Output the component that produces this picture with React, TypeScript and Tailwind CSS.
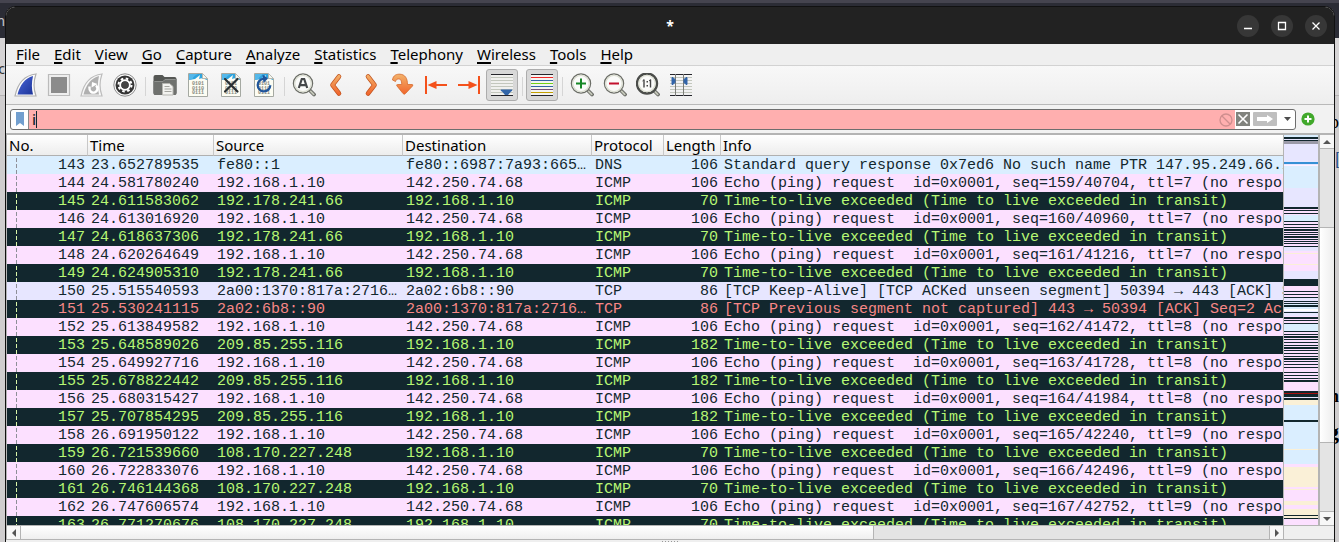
import React from 'react';

type Kind = 'dns' | 'icmp' | 'ttl' | 'tcp' | 'bad';

const tones: Record<Kind, string> = {
  dns: 'bg-[#daeeff] text-[#12272e]',
  icmp: 'bg-[#fce0ff] text-[#12272e]',
  ttl: 'bg-[#12272e] text-[#b7f774]',
  tcp: 'bg-[#e7e6ff] text-[#12272e]',
  bad: 'bg-[#12272e] text-[#f78787]',
};

const LOCAL = '192.168.1.10';
const TARGET = '142.250.74.68';
const TTL = 'Time-to-live exceeded (Time to live exceeded in transit)';

type Packet = [number, string, string, string, string, number, string, Kind];

const ping = (no: number, time: string, seq: string, ttl: number): Packet => [
  no, time, LOCAL, TARGET, 'ICMP', 106,
  `Echo (ping) request  id=0x0001, seq=${seq}, ttl=${ttl} (no response found!)`, 'icmp',
];
const exceeded = (no: number, time: string, from: string, len: number): Packet => [
  no, time, from, LOCAL, 'ICMP', len, TTL, 'ttl',
];

const packets: Packet[] = [
  [143, '23.652789535', 'fe80::1', 'fe80::6987:7a93:665…', 'DNS', 106, 'Standard query response 0x7ed6 No such name PTR 147.95.249.66.in-addr.arpa', 'dns'],
  ping(144, '24.581780240', '159/40704', 7),
  exceeded(145, '24.611583062', '192.178.241.66', 70),
  ping(146, '24.613016920', '160/40960', 7),
  exceeded(147, '24.618637306', '192.178.241.66', 70),
  ping(148, '24.620264649', '161/41216', 7),
  exceeded(149, '24.624905310', '192.178.241.66', 70),
  [150, '25.515540593', '2a00:1370:817a:2716…', '2a02:6b8::90', 'TCP', 86, '[TCP Keep-Alive] [TCP ACKed unseen segment] 50394 → 443 [ACK] Seq=1', 'tcp'],
  [151, '25.530241115', '2a02:6b8::90', '2a00:1370:817a:2716…', 'TCP', 86, '[TCP Previous segment not captured] 443 → 50394 [ACK] Seq=2 Ack=2', 'bad'],
  ping(152, '25.613849582', '162/41472', 8),
  exceeded(153, '25.648589026', '209.85.255.116', 182),
  ping(154, '25.649927716', '163/41728', 8),
  exceeded(155, '25.678822442', '209.85.255.116', 182),
  ping(156, '25.680315427', '164/41984', 8),
  exceeded(157, '25.707854295', '209.85.255.116', 182),
  ping(158, '26.691950122', '165/42240', 9),
  exceeded(159, '26.721539660', '108.170.227.248', 70),
  ping(160, '26.722833076', '166/42496', 9),
  exceeded(161, '26.746144368', '108.170.227.248', 70),
  ping(162, '26.747606574', '167/42752', 9),
  exceeded(163, '26.771270676', '108.170.227.248', 70),
];

const columns: [string, string][] = [
  ['No.', 'w-[81px]'],
  ['Time', 'w-[126px]'],
  ['Source', 'w-[189px]'],
  ['Destination', 'w-[189px]'],
  ['Protocol', 'w-[72px]'],
  ['Length', 'w-[57px]'],
  ['Info', ''],
];

const menus = ['File', 'Edit', 'View', 'Go', 'Capture', 'Analyze', 'Statistics', 'Telephony', 'Wireless', 'Tools', 'Help'];

/* Overview strip: [start, height, colour] bands, then thin dark lines. */
const P = '#fce0ff', L = '#e7e6ff', B = '#daeeff', Y = '#faf0d7', D = '#12272e';
const bands: [number, number, string][] = [
  [0, 2, B], [2, 2, D], [4, 1, L], [5, 1, D], [6, 3, '#9b9aa8'], [9, 18, L], [27, 2, '#3590d5'], [29, 1, L], [30, 1, '#fff0ff'],
  [31, 22, B], [53, 19, L], [72, 8, P], [80, 6, B], [86, 25, P], [111, 5, L], [116, 20, P], [118, 1, Y], [129, 1, Y],
  [136, 8, L], [144, 7, D], [151, 12, P], [163, 5, L], [168, 6, B], [174, 2, '#ffffff'], [176, 5, L], [181, 8, P],
  [189, 7, B], [196, 60, P], [256, 3, D], [258, 1, '#a5100f'], [259, 1, D], [260, 5, L],
  [265, 5, Y], [270, 44, B], [285, 2, D], [314, 1, Y], [315, 14, B], [329, 3, P], [332, 20, Y], [352, 14, P], [354, 1, Y],
  [366, 4, Y], [370, 4, P], [374, 10, Y], [384, 5, P],
];
const lines: [number, number][] = [
  [72, 2], [75, 1], [78, 1], [86, 1], [89, 1], [92, 1], [94, 2], [97, 1], [99, 1], [101, 2], [104, 1], [106, 1], [108, 1], [111, 1],
  [156, 1], [159, 1], [162, 1], [166, 1], [168, 1], [170, 2], [177, 1], [182, 2], [185, 1], [188, 1],
  [196, 1], [199, 1], [201, 2], [204, 1], [207, 1], [210, 1], [212, 2], [215, 1], [218, 1], [221, 1], [223, 2], [226, 1], [229, 1],
  [232, 1], [237, 1], [240, 1], [243, 1], [245, 2], [260, 2], [263, 2], [380, 1], [383, 1],
];

function Overview() {
  return (
    <svg className="block h-full w-full" viewBox="0 0 34 390" preserveAspectRatio="none" shapeRendering="crispEdges" aria-hidden="true">
      <rect width="34" height="390" fill={P} />
      {bands.map(([y, h, c], i) => <rect key={i} y={y} width="34" height={h} fill={c} />)}
      {lines.map(([y, h], i) => <rect key={i} y={y} width="34" height={h} fill={D} />)}
    </svg>
  );
}

function Icon({ children }: { children: React.ReactNode }) {
  return <svg className="h-6 w-6" viewBox="0 0 24 24" fill="none" aria-hidden="true">{children}</svg>;
}

function ToolButton({ label, pressed, children }: { label: string; pressed?: boolean; children: React.ReactNode }) {
  return (
    <button
      type="button"
      aria-label={label}
      className={`flex h-8 w-8 items-center justify-center rounded-[3px] border ${pressed ? 'border-[#acacac] bg-[#d8d8d8]' : 'border-transparent'}`}
    >
      <Icon>{children}</Icon>
    </button>
  );
}

const Separator = () => <div className="mr-[2px] ml-[3px] h-[19px] w-px self-center bg-[#d5d5d5]" />;

function Sheet() {
  return (
    <g>
      <path d="M2.500 .5h14l5 5v18h-19z" fill="#fdfdf3" stroke="#a5a9a2" />
      <path d="M3 1h13v5h5v1l-5-2-3 1 1-4-5 4-6 1z" fill="#2fa4df" />
      <path d="M3 1h9C9 2 7 4 6.500 6L3 7z" fill="#55b8ea" />
      <path d="M16.500 .5v5h5z" fill="#f7f7ee" stroke="#b5b9b2" />
      <g fill="#85897f" fontFamily="Liberation Mono" fontSize="5" fontWeight="bold">
        <text x="6" y="12">0101</text>
        <text x="6" y="16.500">0110</text>
        <text x="6" y="21">0111</text>
      </g>
    </g>
  );
}

function Lens({ dark }: { dark?: boolean }) {
  const ring = dark ? '#4b4d4a' : '#6c6e67';
  return (
    <g>
      <path d="M17.500 17l4.500 4.500" stroke="#6a6c67" strokeWidth="3.800" strokeLinecap="round" />
      <path d="M18.500 18.200l3.200 3.200" stroke="#c5c8ba" strokeWidth="1.800" strokeLinecap="round" />
      <circle cx="11" cy="10.500" r={dark ? 10 : 9.6} fill="#fbfbfa" stroke={ring} strokeWidth={dark ? 2.4 : 1.3} />
      <circle cx="11" cy="10.500" r="8.200" stroke="#dcdfd2" strokeWidth="1.200" />
    </g>
  );
}

const FIN = 'M1 23C3.500 11 9 2.500 22 1c-2.500 7-2.500 15 0 22z';
const FIN_IN = 'M3.500 21.500C6 12 11 5 19 3c-1.500 7-1.500 12.500 0 18.500z';

function Toolbar() {
  return (
    <div role="toolbar" aria-label="Main toolbar" className="flex h-[39px] shrink-0 items-start gap-px border-b border-[#b9b9b9] bg-linear-to-b from-[#f8f8f8] to-[#eeeeee] pt-[3px] pl-1">
      <ToolButton label="Start capture">
        <path d={FIN} fill="#fbfbfb" stroke="#b0b0b0" strokeWidth="1.200" />
        <path d={FIN_IN} fill="url(#fin)" />
        <defs><linearGradient id="fin" x2="1" y2="1"><stop stopColor="#4a66d8" /><stop offset="1" stopColor="#1c3499" /></linearGradient></defs>
      </ToolButton>
      <ToolButton label="Stop capture">
        <path d="M1.500 1.500h21v21h-21z" fill="#eee" stroke="#bbb" strokeWidth="1.200" /><path d="M4 4h16v16H4z" fill="#8b8b8b" />
      </ToolButton>
      <ToolButton label="Restart capture">
        <path d={FIN} fill="#f7f7f7" stroke="#bdbdbd" strokeWidth="1.200" />
        <path d={FIN_IN} fill="#b0b0b0" />
        <path d="M9.500 13.500v1.500a4 4 0 1 0 6.500-2.500" stroke="#fff" strokeWidth="2.400" /><path d="M11.500 14.500l.5-5.500 5.500 2z" fill="#fff" />
      </ToolButton>
      <ToolButton label="Capture options">
        <circle cx="12" cy="12" r="11.200" fill="#f9f9f9" stroke="#8d8d8d" />
        <circle cx="12" cy="12" r="9.500" fill="#353535" />
        <circle cx="12" cy="12" r="4.800" stroke="#fff" strokeWidth="2" />
        <circle cx="12" cy="12" r="6.500" stroke="#fff" strokeWidth="2" strokeDasharray="2.550 2.550" />
        <circle cx="12" cy="12" r="3.500" fill="#444" />
      </ToolButton>
      <Separator />
      <ToolButton label="Open file">
        <path d="M.5 4q0-2 2-2h7l2 2h10q2 0 2 2v14q0 2-2 2h-19q-2 0-2-2z" fill="#555754" />
        <path d="M.5 8h9.500l2-2h11.500v14q0 2-2 2h-19q-2 0-2-2z" fill="#6f716e" />
        <path d="M1.500 8.500H10l2-2h10.500" stroke="#8f918e" />
        <path d="M9.500 10.500h7l3.500 3v8.500H9.500z" fill="#f2f2ef" stroke="#b5b5b0" />
        <path d="M11.500 13.500h5M11.500 16h7M11.500 18.500h7" stroke="#a5a5a0" />
      </ToolButton>
      <ToolButton label="Save file"><Sheet /></ToolButton>
      <ToolButton label="Close file">
        <Sheet /><path d="M6 6l12.500 12.500M18.500 6L6 18.500" stroke="#2a3033" strokeWidth="2.200" strokeLinecap="round" />
      </ToolButton>
      <ToolButton label="Reload file">
        <Sheet /><path d="M12 5.800a6.300 6.300 0 1 0 6.300 6.500" stroke="#20559b" strokeWidth="2.300" /><path d="M10.500 1.500l5.500 4-4.500 4.500z" fill="#20559b" />
      </ToolButton>
      <Separator />
      <ToolButton label="Find packet">
        <Lens /><path d="M6.800 15L9.800 6h2.400l3 9M8.500 12.200h5" stroke="#45484a" strokeWidth="2.200" />
      </ToolButton>
      <ToolButton label="Previous packet">
        <path d="M14 3.500L7.500 12l6.500 8.500" stroke="#c2541f" strokeWidth="4.600" strokeLinecap="round" strokeLinejoin="round" />
        <path d="M14 3.500L7.500 12l6.500 8.500" stroke="url(#org)" strokeWidth="3.200" strokeLinecap="round" strokeLinejoin="round" />
        <defs><linearGradient id="org" gradientUnits="userSpaceOnUse" x1="0" y1="2" x2="0" y2="22"><stop stopColor="#f3b069" /><stop offset="1" stopColor="#f0622a" /></linearGradient></defs>
      </ToolButton>
      <ToolButton label="Next packet">
        <path d="M10 3.500l6.500 8.500-6.500 8.500" stroke="#c2541f" strokeWidth="4.600" strokeLinecap="round" strokeLinejoin="round" />
        <path d="M10 3.500l6.500 8.500-6.500 8.500" stroke="url(#org)" strokeWidth="3.200" strokeLinecap="round" strokeLinejoin="round" />
      </ToolButton>
      <ToolButton label="Go to packet">
        <path d="M1.500 7C2 2 6 1 9 1.200c5 .3 7.500 4 7.500 10.300h4.500q1.500 0 .5 1.500l-7 7.500q-1.200 1.500-2.500 0l-6-7.500q-1-1.500 .5-1.500h4.200c0-4-1-5.500-3.200-5.500-1.800 0-2.500 1-3 2.500z" fill="url(#org)" stroke="#d56a2c" strokeWidth=".8" />
      </ToolButton>
      <ToolButton label="First packet">
        <path d="M2 3v18M8 12h15" stroke="#f4511b" strokeWidth="2" /><path d="M3.500 12l9-4v8z" fill="#f4511b" />
      </ToolButton>
      <ToolButton label="Last packet">
        <path d="M22 3v18M1 12h15" stroke="#f4511b" strokeWidth="2" /><path d="M20.500 12l-9-4v8z" fill="#f4511b" />
      </ToolButton>
      <ToolButton label="Auto scroll" pressed>
        <path d="M1 1h22v22H1z" fill="#f0f0ee" />
        <path d="M1 4.500h22M1 7.500h22M1 10.500h22M1 13.500h22M1 16.500h22M1 19.500h22" stroke="#c3c7bd" />
        <path d="M1 1.500h22M1 22.500h22" stroke="#25252b" />
        <path d="M11 16.500h11q1 1-1 2l-3 3.500h-3l-3-3.500q-2-1-1-2z" fill="#3265a8" />
      </ToolButton>
      <Separator />
      <ToolButton label="Colorize packets" pressed>
        <path d="M1 1h22v22H1z" fill="#f4f4f2" />
        <path d="M1 1.500h22M1 22.500h22" stroke="#25252b" />
        <path d="M1 4.500h22" stroke="#ef2929" /><path d="M1 7.500h22" stroke="#3465a4" /><path d="M1 10.500h22" stroke="#73d216" />
        <path d="M1 13.500h22" stroke="#3465a4" /><path d="M1 16.500h22" stroke="#75507b" /><path d="M1 19.500h22" stroke="#c4a000" />
      </ToolButton>
      <Separator />
      <ToolButton label="Zoom in"><Lens /><path d="M6 10.500h10M11 5.500v10" stroke="#168826" strokeWidth="2" /></ToolButton>
      <ToolButton label="Zoom out"><Lens /><path d="M6 10.500h10" stroke="#c4122e" strokeWidth="2" /></ToolButton>
      <ToolButton label="Normal size">
        <Lens dark /><path d="M8 6.500v8M14.500 6.500v8" stroke="#454545" strokeWidth="1.400" /><path d="M6.500 8l1.500-1.200M13 8l1.500-1.200" stroke="#454545" /><path d="M10.500 8H12v1.500h-1.500zM10.500 12H12v1.500h-1.500z" fill="#454545" />
      </ToolButton>
      <ToolButton label="Resize columns">
        <path d="M1 4.500h22M1 7.500h22M1 10.500h22M1 13.500h22M1 16.500h22M1 19.500h22" stroke="#c3c7bd" />
        <path d="M1 1.500h22M1 22.500h22" stroke="#25252b" />
        <path d="M6.500 1v22M14.500 1v22" stroke="#7b7d79" />
        <path d="M3 4.500h1l2 2v3l-2 2H3zM18 4.500h-1l-2 2v3l2 2h1z" fill="#3265a8" stroke="#3265a8" />
      </ToolButton>
    </div>
  );
}

function FilterBar() {
  return (
    <div className="flex h-7 shrink-0 items-center gap-1 bg-[#f2f2f2] pr-[19px] pl-1">
      <div className="flex h-[21px] flex-1 items-stretch overflow-hidden rounded-[3px] border border-[#6e6e6e] bg-white">
        <button type="button" aria-label="Filter bookmarks" className="flex w-[18px] items-center justify-center border-r border-[#8a8a8a]">
          <svg className="h-[14px] w-2" viewBox="0 0 8 14" aria-hidden="true"><path d="M0 0h8v14l-4-3-4 3z" fill="#729fcf" /></svg>
        </button>
        <div className="relative flex flex-1">
          <input aria-label="Display filter" defaultValue="i" className="w-full bg-[#ffafaf] pr-5 pl-[3px] font-['Noto_Sans',sans-serif] text-[15px] leading-[19px] font-medium text-[#12272e] outline-none" />
          <span className="absolute top-px left-[7px] h-[17px] w-px bg-[#12272e]" />
          <svg className="absolute top-[3px] right-[2px] h-[14px] w-[14px]" viewBox="0 0 14 14" fill="none" stroke="#cf8e8e" strokeWidth="1.300" aria-hidden="true"><circle cx="7" cy="7" r="6" /><path d="M3 3l8 8" /></svg>
        </div>
        <div className="flex w-[60px] items-center gap-[3px] pl-px">
          <button type="button" aria-label="Clear filter">
            <svg className="block h-[14px] w-[14px]" viewBox="0 0 14 14" fill="none" aria-hidden="true"><path d="M0 0h14v14H0z" fill="#81837e" /><path d="M2.500 2.500l9 9M11.500 2.500l-9 9" stroke="#fff" strokeWidth="1.600" /></svg>
          </button>
          <button type="button" aria-label="Apply filter">
            <svg className="block h-[14px] w-6" viewBox="0 0 24 14" aria-hidden="true"><rect width="24" height="14" rx="1" fill="#bfbfbf" /><path d="M4 5h10V3l6 4-6 4V9H4z" fill="#fff" /></svg>
          </button>
          <button type="button" aria-label="Filter history" className="ml-1">
            <svg className="block h-1 w-[7px]" viewBox="0 0 7 4" aria-hidden="true"><path d="M0 0h7L3.500 4z" fill="#4d4d4d" /></svg>
          </button>
        </div>
      </div>
      <button type="button" aria-label="Add filter button" className="ml-px">
        <svg className="block h-[14px] w-[14px]" viewBox="0 0 14 14" aria-hidden="true"><circle cx="7" cy="7" r="6.600" fill="#41a82b" /><path d="M7 3.500v7M3.500 7h7" stroke="#fff" strokeWidth="2" /></svg>
      </button>
    </div>
  );
}

function Arrow({ dir }: { dir: 'up' | 'down' | 'left' | 'right' }) {
  const d = { up: 'M0 6h8L4 2z', down: 'M0 2h8L4 6z', left: 'M6 0v8L2 4z', right: 'M2 0v8l4-4z' }[dir];
  return <svg className="h-2 w-2" viewBox="0 0 8 8" aria-hidden="true"><path d={d} fill="#555" /></svg>;
}

const cell = 'overflow-hidden p-0 pt-[2px] pl-[3px]';

function PacketTable() {
  return (
    <table className="w-full table-fixed border-separate border-spacing-0">
      <thead>
        <tr className="h-[21px] bg-linear-to-b from-white to-[#ececec] font-['Noto_Sans',sans-serif] text-[15px] leading-5 text-black">
          {columns.map(([name, width]) => (
            <th key={name} scope="col" className={`${width} border-r border-b border-r-[#c8c8c8] border-b-[#b0b0b0] p-0 pl-[2px] text-left font-normal last:border-r-0`}>{name}</th>
          ))}
        </tr>
      </thead>
      <tbody className="font-['Liberation_Mono',monospace] text-[15px] leading-4">
        {packets.map(([no, time, src, dst, proto, len, info, kind]) => (
          <tr key={no} className={`h-[18px] whitespace-pre ${tones[kind]}`}>
            <td className="p-0 pt-[2px]">
              <div className="flex h-4 justify-between pr-[3px] pl-[9px]">
                <span className={`w-px bg-[repeating-linear-gradient(to_bottom,currentColor_0px,currentColor_4px,transparent_4px,transparent_6px)] ${kind === 'ttl' || kind === 'bad' ? 'text-[#d9f5a8]' : 'text-[#8e8f98]'}`} />
                {no}
              </div>
            </td>
            <td className={cell}>{time}</td>
            <td className={cell}>{src}</td>
            <td className={cell}>{dst}</td>
            <td className={cell}>{proto}</td>
            <td className="overflow-hidden p-0 pt-[2px] pr-[3px] text-right">{len}</td>
            <td className={cell}>{info}</td>
          </tr>
        ))}
      </tbody>
    </table>
  );
}

/* Pieces of the browser page that show past the window's edges. */
function Desktop() {
  return (
    <div aria-hidden="true" className="absolute inset-0 flex flex-col overflow-hidden bg-[#cfcdce]">
      <div className="h-[3px] shrink-0 bg-[#45444f]" />
      <div className="h-[35px] shrink-0 bg-[#2b2c35]" />
      <div className="h-[58px] shrink-0 border-b border-[#b5b3b4] bg-[#d6d4d5]" />
      <div className="absolute inset-y-0 left-0 w-[5px] overflow-hidden">
        <span className="absolute top-[10px] right-0 font-['Noto_Sans',sans-serif] text-[14px] text-[#c5c5ca]">m</span>
        <span className="absolute top-[58px] right-0 font-['Noto_Sans',sans-serif] text-[14px] text-[#333]">c</span>
      </div>
      <div className="absolute inset-y-0 right-0 w-1 overflow-hidden font-['Liberation_Serif',serif] text-[18px] leading-6 text-black">
        <span className="absolute top-[110px] right-0">p</span>
        <span className="absolute top-[147px] left-0 text-[#1f4e86]">[</span>
        <span className="absolute top-[384px] right-0 font-bold">n</span>
        <span className="absolute top-[420px] right-0 text-[22px] font-bold">g</span>
      </div>
    </div>
  );
}

export default function App() {
  return (
    <div className="relative h-screen overflow-hidden">
      <Desktop />
      <main className="relative flex h-full flex-col pt-[6px] pr-1 pl-[5px]">
        <div className="flex min-h-0 flex-1 flex-col overflow-hidden rounded-t-[10px] border-x border-t border-[#111] bg-[#efefef]">
          <header className="grid h-[37px] shrink-0 grid-cols-[1fr_auto_1fr] items-center bg-[#222222]">
            <h1 className="col-start-2 font-['Noto_Sans',sans-serif] text-[14px] font-bold text-white">*</h1>
            <div className="flex justify-end gap-3 pr-[7px]">
              {([
                ['Minimize', 'M7 13.500h8'],
                ['Maximize', 'M7.500 7.500h7v7h-7z'],
                ['Close', 'M7.500 7.500l7 7M14.500 7.500l-7 7'],
              ] as const).map(([name, d]) => (
                <button key={name} type="button" aria-label={name} className="h-[22px] w-[22px] rounded-full bg-[#373737]">
                  <svg className="h-[22px] w-[22px]" viewBox="0 0 22 22" fill="none" stroke="#fff" strokeWidth="1.300" aria-hidden="true"><path d={d} /></svg>
                </button>
              ))}
            </div>
          </header>

          <nav aria-label="Application menu" className="flex h-[22px] shrink-0 items-start gap-[14px] border-b border-[#d2d2d2] bg-[#efefef] pl-[10px] font-['Noto_Sans',sans-serif] text-[15px] leading-5 text-black">
            {menus.map((m) => (
              <button key={m} type="button"><span className="underline decoration-2 underline-offset-2">{m[0]}</span>{m.slice(1)}</button>
            ))}
          </nav>

          <Toolbar />
          <FilterBar />

          <section aria-label="Packet list" className="flex min-h-0 flex-1 flex-col border-t-2 border-[#b4b4b4]">
            <div className="flex min-h-0 flex-1">
              <div className="min-w-0 flex-1 overflow-hidden border-l border-[#b4b4b4]">
                <PacketTable />
              </div>
              <div className="w-9 shrink-0 border-x border-[#b4b4b4]"><Overview /></div>
              <div className="flex w-[15px] shrink-0 flex-col border-l border-[#b4b4b4] bg-[#e4e4e4]">
                <button type="button" aria-label="Scroll up" className="flex h-[14px] items-center justify-center border-b border-[#b4b4b4] bg-[#f7f7f7]"><Arrow dir="up" /></button>
                <div className="flex-[78]" />
                <div className="flex-[216] border-y border-[#b4b4b4] bg-linear-to-r from-white to-[#ededed]" />
                <div className="flex-[68]" />
                <button type="button" aria-label="Scroll down" className="flex h-[14px] items-center justify-center border-t border-[#b4b4b4] bg-[#f7f7f7]"><Arrow dir="down" /></button>
              </div>
            </div>
            <div className="flex h-[15px] shrink-0 border-y border-[#b4b4b4] bg-[#efefef]">
              <div className="flex flex-1 border-x border-[#b4b4b4] bg-[#e4e4e4]">
                <button type="button" aria-label="Scroll left" className="flex w-[14px] items-center justify-center border-r border-[#b4b4b4] bg-[#f7f7f7]"><Arrow dir="left" /></button>
                <div className="flex-[853] border-r border-[#b4b4b4] bg-linear-to-b from-white to-[#efefef]" />
                <div className="flex-[396]" />
                <button type="button" aria-label="Scroll right" className="flex w-[14px] items-center justify-center border-l border-[#b4b4b4] bg-[#f7f7f7]"><Arrow dir="right" /></button>
              </div>
              <div className="w-[50px]" />
            </div>
            <div className="flex h-[2px] shrink-0 items-end justify-center bg-[#efefef]">
              <div className="h-px w-4 bg-[repeating-linear-gradient(to_right,#999_0px,#999_1px,transparent_1px,transparent_3px)]" />
            </div>
          </section>
        </div>
      </main>
    </div>
  );
}
